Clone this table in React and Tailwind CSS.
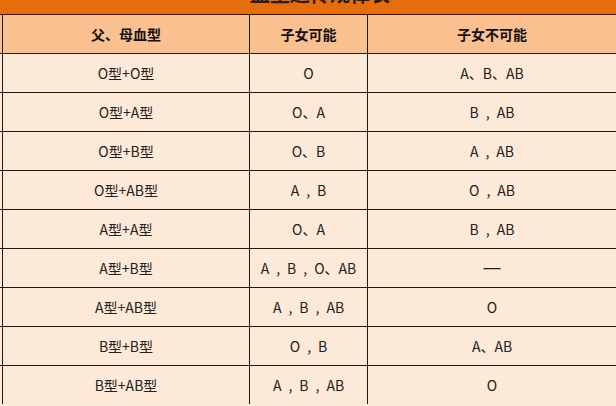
import React from "react";

const C = "\u2002,\u2002";
const dash = (
  <span
    className="text-[17px]"
    style={{ fontFamily: '"Liberation Sans", sans-serif' }}
  >
    —
  </span>
);
const rows = [
  ["O型+O型", "O", "A、B、AB"],
  ["O型+A型", "O、A", `B${C}AB`],
  ["O型+B型", "O、B", `A${C}AB`],
  ["O型+AB型", `A${C}B`, `O${C}AB`],
  ["A型+A型", "O、A", `B${C}AB`],
  ["A型+B型", `A${C}B${C}O、AB`, dash],
  ["A型+AB型", `A${C}B${C}AB`, "O"],
  ["B型+B型", `O${C}B`, "A、AB"],
  ["B型+AB型", `A${C}B${C}AB`, "O"],
];

function Row({ cells, header }) {
  const base =
    "flex items-center justify-center border-l border-[#1a1a1a] h-full whitespace-pre";
  return (
    <div
      className={`flex h-[39px] border-t border-[#1a1a1a] ${
        header ? "bg-[#fbc08f] font-bold text-[#111]" : "bg-[#fde9d8]"
      }`}
    >
      <div className="w-[2px] shrink-0" />
      <div className={`${base} w-[247px] shrink-0`}>{cells[0]}</div>
      <div className={`${base} w-[118px] shrink-0`}>{cells[1]}</div>
      <div className={`${base} flex-1`}>{cells[2]}</div>
    </div>
  );
}

export default function App() {
  return (
    <div
      className="w-[616px] h-[406px] overflow-hidden bg-[#fde9d8] text-[14px] text-[#222]"
      style={{ fontFamily: '"Noto Sans CJK SC", "Noto Sans", sans-serif' }}
    >
      <div className="h-[14px] overflow-hidden bg-[#e56d0c] flex justify-center pl-[24px]">
        <div className="mt-[-16px] text-[20px] leading-[20px] font-bold text-[#2a1a10]">
          血型遗传规律表
        </div>
      </div>
      <Row header cells={["父、母血型", "子女可能", "子女不可能"]} />
      {rows.map((r, i) => (
        <Row key={i} cells={r} />
      ))}
    </div>
  );
}
